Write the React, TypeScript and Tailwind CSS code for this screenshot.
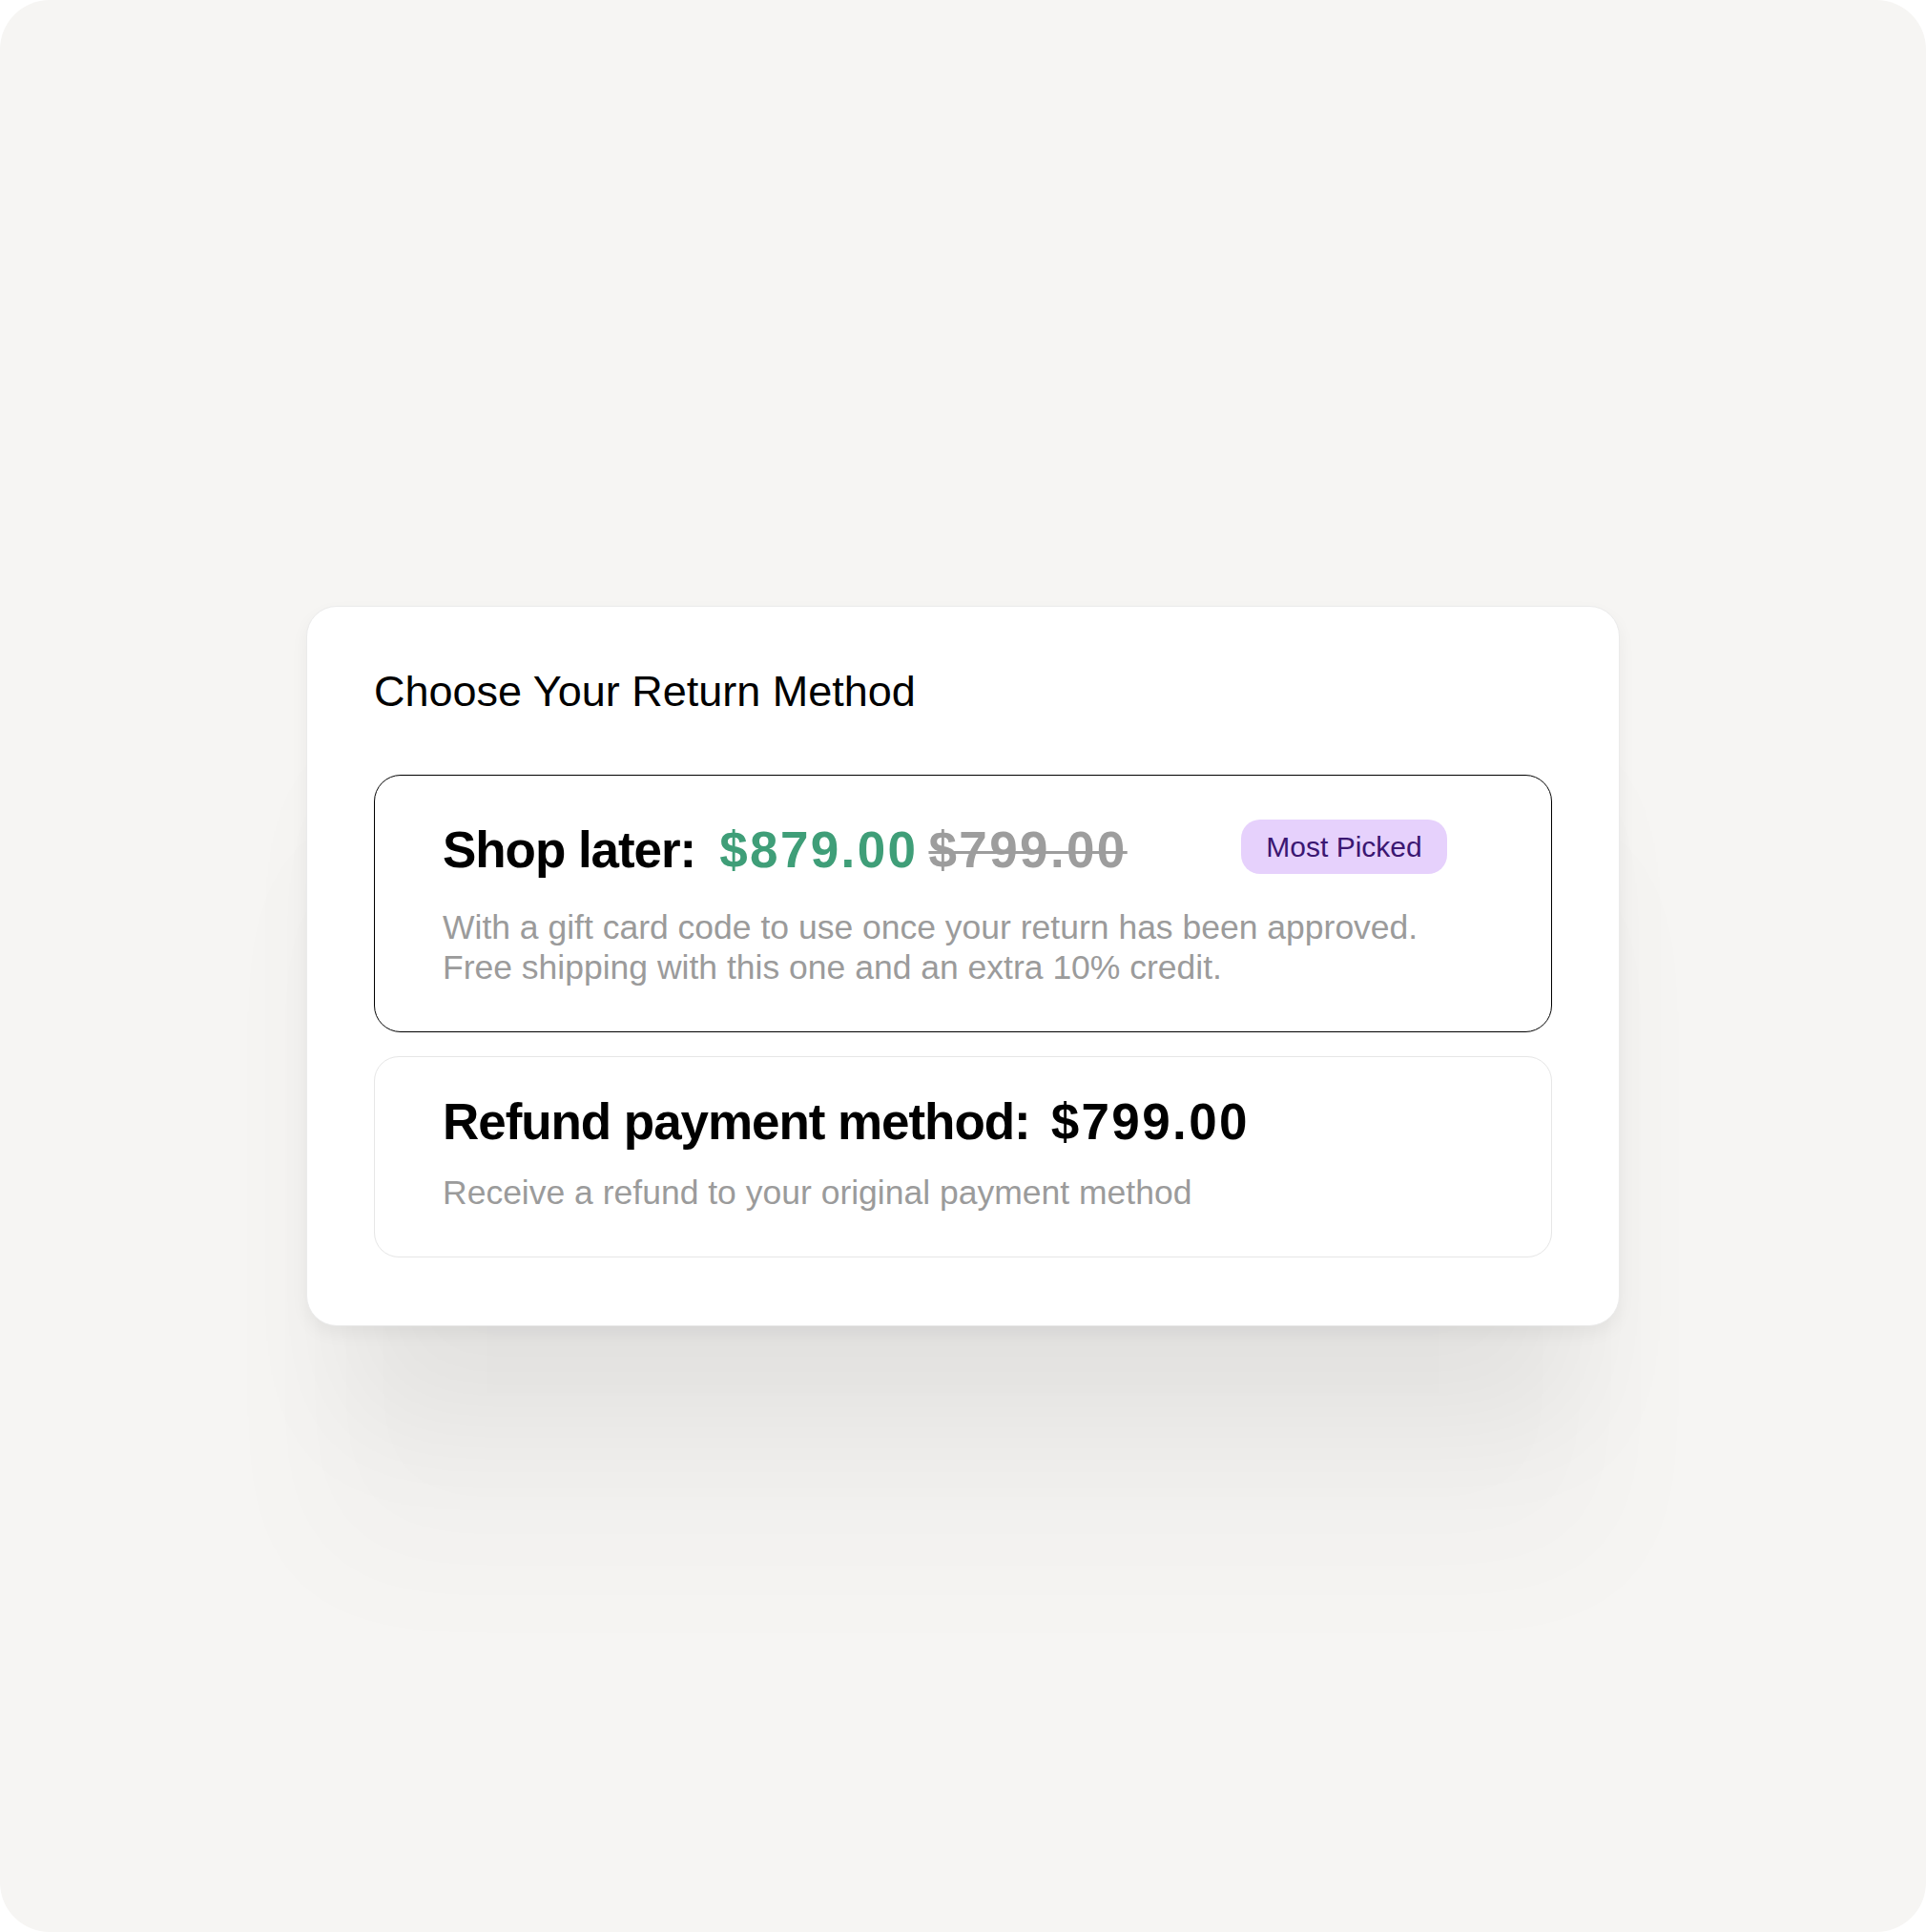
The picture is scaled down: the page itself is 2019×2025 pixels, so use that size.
const sans = { fontFamily: '"Liberation Sans", Arial, sans-serif' }

function Badge({ children }: { children: React.ReactNode }) {
  return (
    <span className="flex h-[57px] w-[216px] shrink-0 items-center justify-center rounded-[20px] bg-[#e6d1fc] text-[30px] leading-none text-[#3b1772]">
      {children}
    </span>
  )
}

export default function App() {
  return (
    <div className="h-[2025px] w-full bg-white" style={sans}>
      <div className="flex h-full w-full items-center justify-center rounded-[52px] bg-[#f6f5f3]">
        <div className="w-[1377px] rounded-[32px] border border-[#ebebeb] bg-white px-[70px] pt-[67px] pb-[71px] shadow-[0_8px_18px_rgba(0,0,0,0.05),0_150px_120px_-50px_rgba(0,0,0,0.06),0_260px_150px_-10px_rgba(0,0,0,0.025)]">
          <h1 className="text-[45px] leading-[44px] font-normal text-black">Choose Your Return Method</h1>

          <div className="mt-[65px] flex flex-col gap-[25px]">
            <div className="rounded-[28px] border-[1.5px] border-black pt-[46px] pr-[109px] pb-[46px] pl-[71px]">
              <div className="flex items-start justify-between">
                <div className="mt-[3px] flex items-baseline text-[53px] leading-[58px] font-bold">
                  <span className="tracking-[-0.02em] text-black">Shop later:</span>
                  <span className="ml-[25px] tracking-[0.045em] text-[#3f9e78]">$879.00</span>
                  <span className="ml-[11px] tracking-[0.045em] text-[#9d9d9d] line-through decoration-[3px]">$799.00</span>
                </div>
                <Badge>Most Picked</Badge>
              </div>
              <p className="mt-[31px] text-[35.5px] leading-[42px] text-[#9b9b9b]">
                With a gift card code to use once your return has been approved.
                <br />
                Free shipping with this one and an extra 10% credit.
              </p>
            </div>

            <div className="rounded-[26px] border border-[#e6e6e6] pt-[39px] pr-[109px] pb-[46px] pl-[71px]">
              <div className="flex items-baseline text-[53px] leading-[58px] font-bold text-black">
                <span className="tracking-[-0.02em]">Refund payment method:</span>
                <span className="ml-[22px] tracking-[0.045em]">$799.00</span>
              </div>
              <p className="mt-[24px] text-[35.5px] leading-[42px] text-[#9b9b9b]">
                Receive a refund to your original payment method
              </p>
            </div>
          </div>
        </div>
      </div>
    </div>
  )
}
